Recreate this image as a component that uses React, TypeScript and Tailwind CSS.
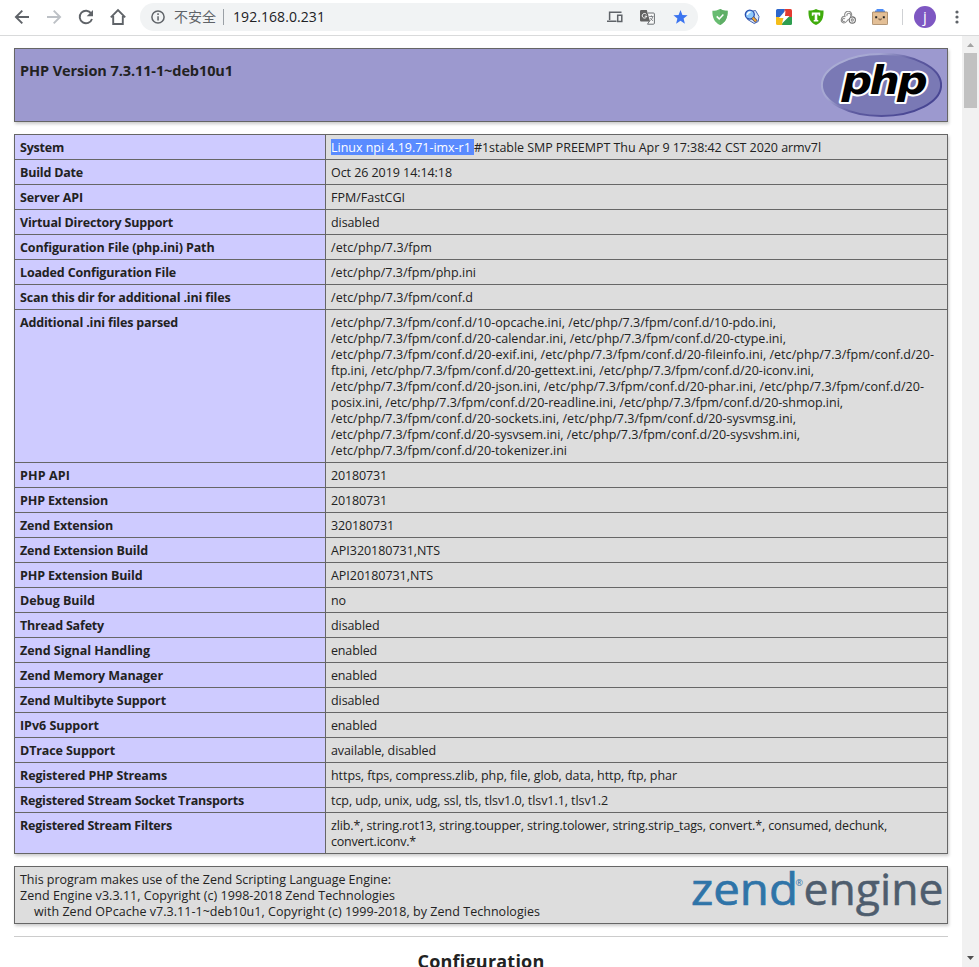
import { useLayoutEffect, useRef, useState } from "react";
import type { ReactNode } from "react";

type LineProps = { text: string; width: number; className?: string };

// One line of text whose tracking is adjusted so that it spans `width` pixels.
function Line({ text, width, className = "" }: LineProps) {
  const ref = useRef<HTMLSpanElement>(null);
  const [tracking, setTracking] = useState(0);
  useLayoutEffect(() => {
    if (ref.current) {
      const natural = ref.current.getBoundingClientRect().width - tracking * text.length;
      setTracking((width - natural) / text.length);
    }
  }, [text, width]);
  return (
    <span ref={ref} className={"block w-fit whitespace-pre " + className} style={{ letterSpacing: tracking + "px" }}>
      {text}
    </span>
  );
}

type Row = { label: string; lw: number; lines: [string, number][] };

const rows: Row[] = [
  { label: "System", lw: 44, lines: [] },
  { label: "Build Date", lw: 63, lines: [["Oct 26 2019 14:14:18", 121]] },
  { label: "Server API", lw: 63, lines: [["FPM/FastCGI", 74]] },
  { label: "Virtual Directory Support", lw: 153, lines: [["disabled", 48.5]] },
  { label: "Configuration File (php.ini) Path", lw: 194.5, lines: [["/etc/php/7.3/fpm", 101]] },
  { label: "Loaded Configuration File", lw: 156, lines: [["/etc/php/7.3/fpm/php.ini", 145]] },
  { label: "Scan this dir for additional .ini files", lw: 210.5, lines: [["/etc/php/7.3/fpm/conf.d", 142]] },
  {
    label: "Additional .ini files parsed",
    lw: 158,
    lines: [
      ["/etc/php/7.3/fpm/conf.d/10-opcache.ini, /etc/php/7.3/fpm/conf.d/10-pdo.ini,", 445],
      ["/etc/php/7.3/fpm/conf.d/20-calendar.ini, /etc/php/7.3/fpm/conf.d/20-ctype.ini,", 455],
      ["/etc/php/7.3/fpm/conf.d/20-exif.ini, /etc/php/7.3/fpm/conf.d/20-fileinfo.ini, /etc/php/7.3/fpm/conf.d/20-", 603],
      ["ftp.ini, /etc/php/7.3/fpm/conf.d/20-gettext.ini, /etc/php/7.3/fpm/conf.d/20-iconv.ini,", 483],
      ["/etc/php/7.3/fpm/conf.d/20-json.ini, /etc/php/7.3/fpm/conf.d/20-phar.ini, /etc/php/7.3/fpm/conf.d/20-", 593],
      ["posix.ini, /etc/php/7.3/fpm/conf.d/20-readline.ini, /etc/php/7.3/fpm/conf.d/20-shmop.ini,", 512],
      ["/etc/php/7.3/fpm/conf.d/20-sockets.ini, /etc/php/7.3/fpm/conf.d/20-sysvmsg.ini,", 465],
      ["/etc/php/7.3/fpm/conf.d/20-sysvsem.ini, /etc/php/7.3/fpm/conf.d/20-sysvshm.ini,", 469],
      ["/etc/php/7.3/fpm/conf.d/20-tokenizer.ini", 236],
    ],
  },
  { label: "PHP API", lw: 50, lines: [["20180731", 56]] },
  { label: "PHP Extension", lw: 88, lines: [["20180731", 56]] },
  { label: "Zend Extension", lw: 93, lines: [["320180731", 63]] },
  { label: "Zend Extension Build", lw: 128, lines: [["API320180731,NTS", 109]] },
  { label: "PHP Extension Build", lw: 122.5, lines: [["API20180731,NTS", 102]] },
  { label: "Debug Build", lw: 75, lines: [["no", 15]] },
  { label: "Thread Safety", lw: 84, lines: [["disabled", 48.5]] },
  { label: "Zend Signal Handling", lw: 130, lines: [["enabled", 46]] },
  { label: "Zend Memory Manager", lw: 143, lines: [["enabled", 46]] },
  { label: "Zend Multibyte Support", lw: 146, lines: [["disabled", 48.5]] },
  { label: "IPv6 Support", lw: 79, lines: [["enabled", 46]] },
  { label: "DTrace Support", lw: 95, lines: [["available, disabled", 105]] },
  { label: "Registered PHP Streams", lw: 147, lines: [["https, ftps, compress.zlib, php, file, glob, data, http, ftp, phar", 346]] },
  { label: "Registered Stream Socket Transports", lw: 224, lines: [["tcp, udp, unix, udg, ssl, tls, tlsv1.0, tlsv1.1, tlsv1.2", 277]] },
  {
    label: "Registered Stream Filters",
    lw: 152,
    lines: [
      ["zlib.*, string.rot13, string.toupper, string.tolower, string.strip_tags, convert.*, consumed, dechunk,", 556],
      ["convert.iconv.*", 85],
    ],
  },
];

function Slot({ children }: { children: ReactNode }) {
  return <div className="flex w-8 shrink-0 items-center justify-center">{children}</div>;
}

function Toolbar() {
  return (
    <header className="flex h-9 shrink-0 items-start border-b border-[#d9dadb] bg-white pl-1.5">
      <div className="flex h-[34px] items-center">
        <Slot>
          <svg width="16" height="16" viewBox="0 0 16 16" fill="none" stroke="#5f6368" strokeWidth="1.9">
            <path d="M15 8H2.5M8.3 1.6 1.9 8l6.4 6.4" />
          </svg>
        </Slot>
        <Slot>
          <svg width="16" height="16" viewBox="0 0 16 16" fill="none" stroke="#bdc1c6" strokeWidth="1.9">
            <path d="M1 8h12.5M7.7 1.6 14.1 8l-6.4 6.4" />
          </svg>
        </Slot>
        <Slot>
          <svg width="16" height="16" viewBox="0 0 16 16">
            <path d="M13.2 4.4A6.3 6.3 0 1 0 14 10" fill="none" stroke="#5f6368" strokeWidth="1.9" />
            <path d="M15 1v6.3H8.7z" fill="#5f6368" />
          </svg>
        </Slot>
        <Slot>
          <svg width="18" height="18" viewBox="0 0 18 18" fill="none" stroke="#5f6368" strokeWidth="1.9">
            <path d="M1.8 9.4 9 2.2l7.2 7.2M4.2 8v8h9.6V8" />
          </svg>
        </Slot>
      </div>
      <div className="ml-1.5 mt-[3px] flex h-7 w-[558px] shrink-0 items-center rounded-full bg-[#f1f3f4] pl-[11px] pr-0.5">
        <svg width="14" height="14" viewBox="0 0 14 14">
          <circle cx="7" cy="7" r="6.1" fill="none" stroke="#5f6368" strokeWidth="1.5" />
          <path d="M6.3 6.2h1.5v4.3H6.3zM6.3 3.3h1.5v1.6H6.3z" fill="#5f6368" />
        </svg>
        <span className="ml-[9px] w-[42px] whitespace-nowrap pb-0.5 text-[14px] leading-5 text-[#5f6368] [font-family:'Noto_Sans_CJK_SC',sans-serif]">不安全</span>
        <span className="ml-[7px] h-4 w-px bg-[#9aa0a6]" />
        <span className="ml-[9px] text-[#202124]">
          <Line text="192.168.0.231" width={92} className="text-[14px] leading-5" />
        </span>
        <div className="ml-auto flex items-center">
          <div className="flex w-8 justify-center">
            <svg width="16" height="12" viewBox="0 0 16 12" fill="none" stroke="#5f6368" strokeWidth="1.5">
              <path d="M14.500 1.300H2.600V9M0 10.200h9.500" />
              <path d="M10.700 4.200h4.100v6.200h-4.100z" />
            </svg>
          </div>
          <div className="flex w-[33px] justify-center">
            <svg width="15" height="15" viewBox="0 0 15 15">
              <path d="M8 3h5.400a1 1 0 0 1 1 1v9.200a1 1 0 0 1-1 1H7.500L9.500 11" fill="#f8f8f8" stroke="#6b6f73" strokeWidth="1" />
              <path d="M1.200 0h5.600L10 11.500H1.200A1.200 1.200 0 0 1 0 10.300V1.200A1.200 1.200 0 0 1 1.200 0z" fill="#616161" />
              <path d="M6.400 4.400A2.300 2.300 0 1 0 6.800 6.200H4.700" fill="none" stroke="#fff" strokeWidth="1" />
              <path d="M9.200 6.500h4.200M11.400 5.400v1.100M12.800 6.700c-.4 1.800-1.400 3-2.600 4M10.400 8c.6 1.200 1.400 2 2.600 2.800" fill="none" stroke="#6b6f73" strokeWidth=".8" />
            </svg>
          </div>
          <div className="flex w-8 justify-center">
            <svg width="15" height="14" viewBox="0 0 15 14">
              <path d="m7.5 0 1.9 4.9 5.2.3-4 3.3 1.3 5.2-4.4-2.9-4.4 2.900 1.300-5.200-4-3.300 5.200-.3z" fill="#3b74f0" />
            </svg>
          </div>
        </div>
      </div>
      <div className="ml-1.5 flex h-[34px] shrink-0 items-center">
        <Slot>
          <svg width="16" height="16" viewBox="0 0 16 16">
            <path d="M8 0c2.300 1.300 5 1.800 7.600 1.800C15.800 8.500 13.600 13.500 8 16 2.400 13.500.2 8.500.4 1.800 3 1.800 5.700 1.300 8 0z" fill="#68bc71" />
            <path d="M8 0c2.300 1.300 5 1.800 7.600 1.800C15.800 8.500 13.600 13.500 8 16z" fill="#5fae66" />
            <path d="m4.700 7.400 2.500 2.500 4.200-4.400" fill="none" stroke="#fff" strokeWidth="1.500" />
          </svg>
        </Slot>
        <Slot>
          <svg width="16" height="16" viewBox="0 0 16 16">
            <path d="M7 2.500 11.500 1.500 15 7.500l-.8 5-4 2-6.500-4z" fill="#dce8f8" stroke="#4566b4" strokeWidth="1" />
            <circle cx="5.800" cy="5.600" r="4.500" fill="#8ec8fb" stroke="#2a4fae" strokeWidth="1.300" />
            <path d="M3.500 6A2.600 2.600 0 0 1 6.500 3.200" fill="none" stroke="#fff" strokeWidth="1.500" />
            <path d="m8.500 8.500 3.900 4.100" stroke="#3a3f7a" strokeWidth="3.400" />
            <path d="m8.700 8.700 3.300 3.500" stroke="#f3a92c" strokeWidth="2" />
          </svg>
        </Slot>
        <Slot>
          <svg width="16" height="16" viewBox="0 0 16 16">
            <path d="M1.500 0H9L7 8H0V1.500A1.500 1.500 0 0 1 1.500 0z" fill="#2d67cc" />
            <path d="M9 0h5.500A1.500 1.500 0 0 1 16 1.500V8H7z" fill="#e33b32" />
            <path d="M0 8h8v8H1.500A1.500 1.500 0 0 1 0 14.500z" fill="#f4bd1a" />
            <path d="M8 8h8v6.500a1.500 1.500 0 0 1-1.500 1.500H6z" fill="#2e9e50" />
            <path d="M9.500 1.500 3 9h4.400L6 14.500 13.500 7H9z" fill="#fff" />
          </svg>
        </Slot>
        <Slot>
          <svg width="16" height="16" viewBox="0 0 16 16">
            <path d="M8 0c2 1.300 4.500 1.500 7.500 1.500C15.800 9 14 13.600 8 16 2 13.600.2 9 .5 1.500 3.500 1.500 6 1.300 8 0z" fill="#3fab0c" />
            <path d="M3.800 3.500h8.400v3.200h-1.600V5.500H9.300v5.400h1v1.600H5.700v-1.600h1V5.500H5.400v1.200H3.800z" fill="#fff" />
          </svg>
        </Slot>
        <Slot>
          <svg width="16" height="13" viewBox="0 0 16 13" fill="none" stroke="#8d8d8d" strokeWidth="1.100">
            <path d="M5 5.200A3.500 3.500 0 1 1 11.500 4.800" />
            <path d="M10.200 5.800A2 2 0 1 0 7 5" />
            <path d="M5.500 5.600A3.200 3.200 0 0 0 3.800 12c2.200 0 3.300-2.200 4.800-3.900" />
            <path d="M5 8A1.500 1.500 0 1 0 5 10" />
            <circle cx="12.300" cy="9" r="3.100" stroke="#6d6d6d" />
            <circle cx="12.300" cy="9" r="1.100" />
          </svg>
        </Slot>
        <Slot>
          <svg width="16" height="16" viewBox="0 0 16 16">
            <path d="M3 4V1.500h1.500V0h7v1.500H13V4z" fill="#4c8bf5" />
            <rect x=".4" y="3" width="15.200" height="12.600" rx=".8" fill="#e3bf96" stroke="#9b7a55" strokeWidth=".8" />
            <path d="M3.200 7.200h2v2h-2zM10.800 7.200h2v2h-2z" fill="#222" />
            <path d="M6.400 10h1.200M8.600 10h1.200M7.400 10.800h1.400" stroke="#54402c" strokeWidth="1" />
          </svg>
        </Slot>
        <span className="ml-1.5 h-4 w-px bg-[#cfd1d4]" />
        <span className="ml-[11px] flex size-[22px] items-center justify-center rounded-full bg-[#7e57c2] pb-0.5 text-[15px] leading-none text-white">j</span>
        <svg className="ml-[19px]" width="4" height="14" viewBox="0 0 4 14" fill="#5f6368">
          <circle cx="2" cy="2" r="1.600" />
          <circle cx="2" cy="7" r="1.600" />
          <circle cx="2" cy="12" r="1.600" />
        </svg>
      </div>
    </header>
  );
}

function PhpLogo() {
  return (
    <svg className="shrink-0" width="122" height="66" viewBox="820 52 122 66">
      <defs>
        <linearGradient id="rim" x1="0" y1="0" x2="1" y2="0.6">
          <stop offset="0" stopColor="#aeb2d5" />
          <stop offset="0.35" stopColor="#a5a6d2" />
          <stop offset="0.6" stopColor="#5e5ba0" />
          <stop offset="1" stopColor="#484693" />
        </linearGradient>
      </defs>
      <ellipse cx="881.500" cy="85" rx="59.600" ry="31" fill="#7a79b5" stroke="url(#rim)" strokeWidth="2" />
      <g
        transform="translate(841.5 93.5) scale(1.09 1)"
        fontSize="39.500"
        strokeLinejoin="round"
        className="font-bold italic [font-family:'DejaVu_Sans',sans-serif]"
      >
        <text x="0 25.500 51" y="0" fill="#000" stroke="#fff" strokeWidth="4.200" paintOrder="stroke">
          php
        </text>
      </g>
    </svg>
  );
}

function ZendLogo() {
  return (
    <svg className="shrink-0 overflow-visible" width="254" height="56" viewBox="690 867 254 56">
      <g className="[font-family:'Open_Sans',sans-serif]" fontSize="44.500">
        <text x="691" y="905" textLength="107" lengthAdjust="spacingAndGlyphs" fill="#2f74a8" stroke="#2f74a8" strokeWidth=".7">zend</text>
        <text x="803.500" y="905" textLength="140" lengthAdjust="spacingAndGlyphs" fill="#4e5d6e" stroke="#4e5d6e" strokeWidth=".5">engine</text>
      </g>
      <text x="795.500" y="885.500" fontSize="9" fill="#2f74a8" className="[font-family:'Open_Sans',sans-serif]">®</text>
    </svg>
  );
}

function Scrollbar() {
  return (
    <aside className="flex w-[17px] shrink-0 flex-col items-center bg-[#f1f1f1]">
      <svg className="shrink-0" width="17" height="17" viewBox="0 0 17 17">
        <path d="M5 11h7L8.500 7z" fill="#a3a3a3" />
      </svg>
      <div className="h-[55px] w-[13px] bg-[#c1c1c1]" />
      <svg className="mt-auto shrink-0" width="17" height="17" viewBox="0 0 17 17">
        <path d="M5 6h7l-3.500 4z" fill="#505050" />
      </svg>
    </aside>
  );
}

const boxShadow = "border border-[#666] shadow-[1px_2px_3px_#ccc]";

export default function App() {
  return (
    <div className="flex h-[967px] w-[979px] flex-col overflow-hidden bg-white text-[#222] [font-family:'Open_Sans','Noto_Sans_CJK_SC',sans-serif]">
      <Toolbar />
      <div className="flex min-h-0 flex-1">
        <main className="flex min-w-0 flex-1 flex-col overflow-hidden pl-3.5 pr-3.5 pt-3 text-[12.5px] leading-4">
          <section className={"flex h-[74px] w-[934px] shrink-0 items-start justify-between bg-[#9c99cf] pl-[5px] pr-[5px] pt-[3px] " + boxShadow}>
            <h1 className="mt-[9px] font-bold">
              <Line text="PHP Version 7.3.11-1~deb10u1" width={213} className="text-[14.500px] leading-5" />
            </h1>
            <PhpLogo />
          </section>
          <section className={"mt-3 flex w-[934px] shrink-0 flex-col divide-y divide-[#666] bg-[#ddd] " + boxShadow}>
            {rows.map((row) => (
              <div key={row.label} className="flex">
                <div className="w-[311px] shrink-0 border-r border-[#666] bg-[#cecbff] px-[5px] pb-[3px] pt-[5px] font-bold">
                  <Line text={row.label} width={row.lw} />
                </div>
                {row.label === "System" ? (
                  <div className="flex min-w-0 flex-1 px-[5px] py-1">
                    <Line text="Linux npi 4.19.71-imx-r1 " width={143} className="h-4 bg-[#5a8bff] leading-[18px] text-white" />
                    <Line text="#1stable SMP PREEMPT Thu Apr 9 17:38:42 CST 2020 armv7l" width={347} className="h-4 leading-[18px]" />
                  </div>
                ) : (
                  <div className="min-w-0 flex-1 px-[5px] pb-[3px] pt-[5px]">
                    {row.lines.map(([text, width]) => (
                      <Line key={text} text={text} width={width} />
                    ))}
                  </div>
                )}
              </div>
            ))}
          </section>
          <section className={"mt-3 flex h-[58px] w-[934px] shrink-0 justify-between bg-[#ddd] pl-[5px] pr-[3px] " + boxShadow}>
            <div className="pt-[5px]">
              <Line text="This program makes use of the Zend Scripting Language Engine:" width={371} />
              <Line text="Zend Engine v3.3.11, Copyright (c) 1998-2018 Zend Technologies" width={375} />
              <div className="pl-3.5">
                <Line text="with Zend OPcache v7.3.11-1~deb10u1, Copyright (c) 1999-2018, by Zend Technologies" width={506} />
              </div>
            </div>
            <ZendLogo />
          </section>
          <hr className="mt-3 w-[934px] shrink-0 border-t border-[#ccc]" />
          <h2 className="mt-3 flex w-[934px] shrink-0 justify-center font-bold">
            <Line text="Configuration" width={127} className="text-[18px] leading-6" />
          </h2>
        </main>
        <Scrollbar />
      </div>
    </div>
  );
}
